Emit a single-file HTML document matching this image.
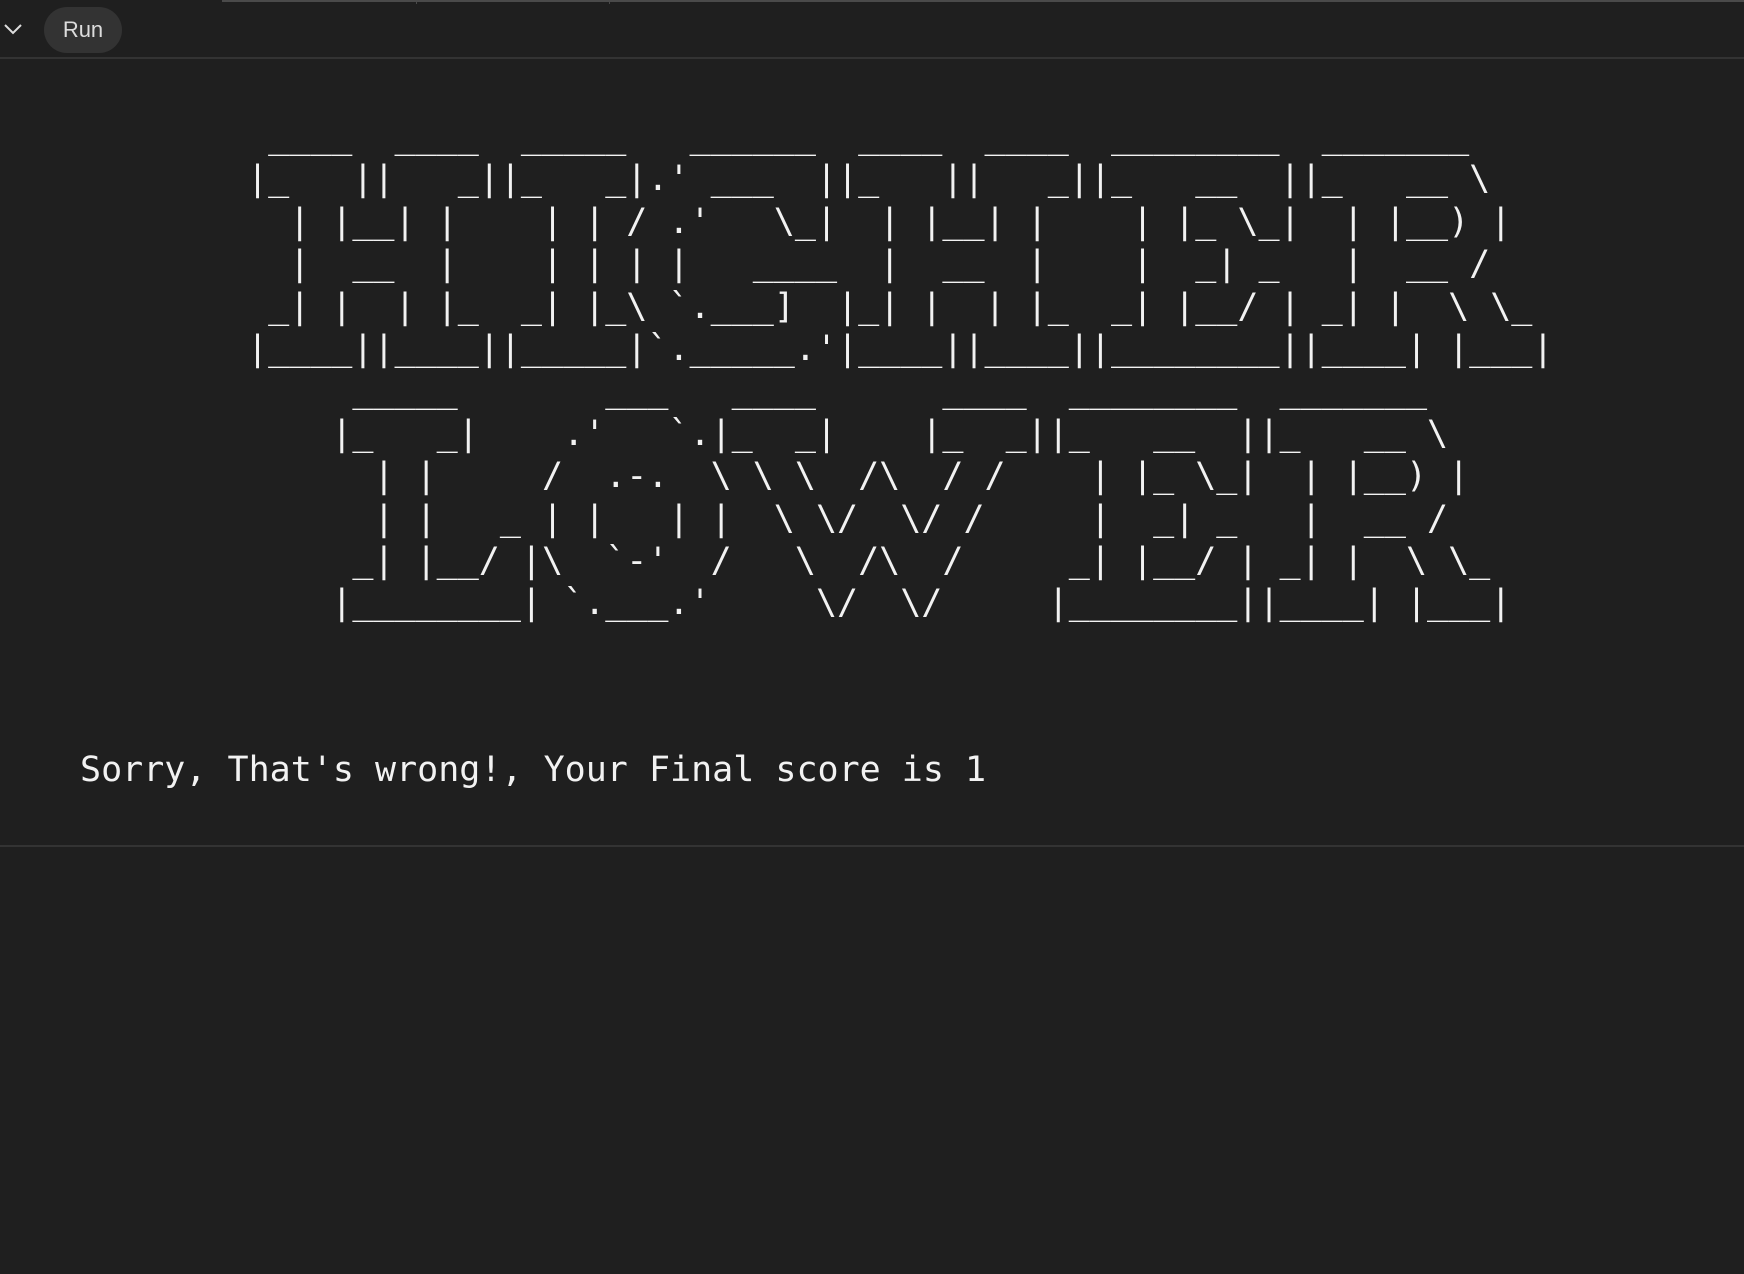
<!DOCTYPE html>
<html><head><meta charset="utf-8">
<style>
html,body{margin:0;padding:0;background:#1f1f1f;width:1744px;height:1274px;overflow:hidden;}
.top{position:absolute;left:222px;right:0;top:0;height:2px;border-top:2px solid #4a4a4a;}
.sep{position:absolute;top:0;width:1px;height:4px;background:#4a4a4a;}
.hdr{position:absolute;left:0;top:57px;width:1744px;height:2px;background:#333;}
.run{position:absolute;left:44px;top:7px;width:78px;height:46px;border-radius:23px;background:#333;color:#ddd;font:22px "Liberation Sans",sans-serif;line-height:46px;text-align:center;}
.chev{position:absolute;left:3px;top:22px;}
pre{position:absolute;margin:0;font-family:"DejaVu Sans Mono","Liberation Mono",monospace;font-size:35px;line-height:42.4px;color:#f2f2f2;}
.bot{position:absolute;left:0;top:845px;width:1744px;height:2px;background:#333;}
</style></head><body>
<div class="top"></div>
<div class="sep" style="left:416px"></div>
<div class="sep" style="left:609px"></div>
<svg class="chev" width="20" height="14" viewBox="0 0 20 14"><path d="M2 3 L10 11 L18 3" fill="none" stroke="#ddd" stroke-width="2"/></svg>
<div class="run">Run</div>
<div class="hdr"></div>
<pre style="left:247px;top:116px;"> ____  ____  _____   ______  ____  ____  ________  _______
|_   ||   _||_   _|.' ___  ||_   ||   _||_   __  ||_   __ \
  | |__| |    | | / .'   \_|  | |__| |    | |_ \_|  | |__) |
  |  __  |    | | | |   ____  |  __  |    |  _| _   |  __ /
 _| |  | |_  _| |_\ `.___]  |_| |  | |_  _| |__/ | _| |  \ \_
|____||____||_____|`._____.'|____||____||________||____| |___|
     _____       ___   ____      ____  ________  _______
    |_   _|    .'   `.|_  _|    |_  _||_   __  ||_   __ \
      | |     /  .-.  \ \ \  /\  / /    | |_ \_|  | |__) |
      | |   _ | |   | |  \ \/  \/ /     |  _| _   |  __ /
     _| |__/ |\  `-'  /   \  /\  /     _| |__/ | _| |  \ \_
    |________| `.___.'     \/  \/     |________||____| |___|</pre>
<pre style="left:80px;top:749px;">Sorry, That's wrong!, Your Final score is 1</pre>
<div class="bot"></div>
</body></html>
